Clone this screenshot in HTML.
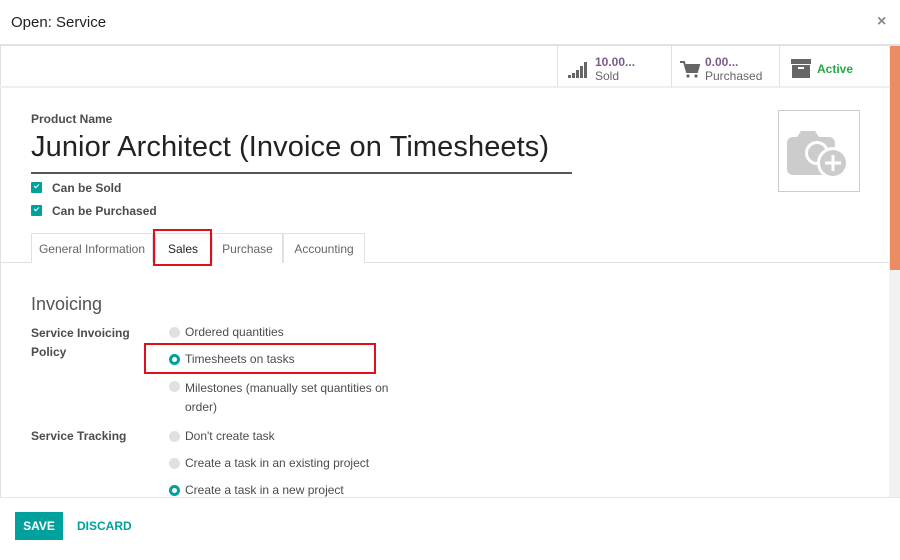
<!DOCTYPE html>
<html><head><style>
*{box-sizing:border-box;margin:0;padding:0}
body{width:900px;height:560px;background:#fff;font-family:"Liberation Sans",sans-serif;color:#4c4c4c;position:relative;overflow:hidden}
.a{position:absolute}
.lbl{font-weight:bold;font-size:12px;color:#4c4c4c}
.cb{position:absolute;width:11px;height:11px;background:#00a09d;border-radius:1px}
.cb:after{content:"";position:absolute;left:3px;top:2px;width:4px;height:2px;border-left:1.5px solid #fff;border-bottom:1.5px solid #fff;transform:rotate(-45deg)}
.rd{position:absolute;width:11px;height:11px;border-radius:50%;background:#dee2e6}
.rd.on{background:#fff;border:3px solid #00a09d}
.t{position:absolute;font-size:12px;color:#4c4c4c}
.tab{position:absolute;top:233px;height:30px;border:1px solid #dee2e6;border-bottom:none;font-size:12px;color:#666;text-align:center;line-height:30px;background:#fff}
</style></head><body>
<div class="a" style="left:11px;top:14px;font-size:15px;color:#222">Open: Service</div>
<div class="a" style="left:877px;top:13px;font-size:16px;color:#888;font-weight:bold">×</div>
<div class="a" style="left:0;top:44px;width:900px;height:2px;background:#dee2e6"></div>
<div class="a" style="left:889px;top:46px;width:11px;height:452px;background:#f1f1f1"></div>
<div class="a" style="left:890px;top:46px;width:10px;height:224px;background:#ec8c63"></div>
<div class="a" style="left:0;top:46px;width:1px;height:452px;background:#dee2e6"></div>
<div class="a" style="left:0;top:86px;width:889px;height:2px;background:#eceef0"></div>
<div class="a" style="left:557px;top:46px;width:1px;height:41px;background:#dee2e6"></div>
<div class="a" style="left:671px;top:46px;width:1px;height:41px;background:#dee2e6"></div>
<div class="a" style="left:779px;top:46px;width:1px;height:41px;background:#dee2e6"></div>
<svg class="a" style="left:568px;top:62px" width="22" height="16"><g fill="#666"><rect x="0" y="13" width="3" height="3"/><rect x="4" y="11" width="3" height="5"/><rect x="8" y="8" width="3" height="8"/><rect x="12" y="4" width="3" height="12"/><rect x="16" y="0" width="3" height="16"/></g></svg>
<div class="a" style="left:595px;top:55px;font-size:12px;color:#7c5b89;font-weight:bold">10.00...</div>
<div class="a" style="left:595px;top:69px;font-size:12px;color:#666">Sold</div>
<svg class="a" style="left:680px;top:61px" width="20" height="17"><path d="M0 1h4l3 10h10l2-7H6" fill="none" stroke="#666" stroke-width="2"/><rect x="6" y="4" width="12" height="6" fill="#666"/><circle cx="8" cy="15" r="1.6" fill="#666"/><circle cx="16" cy="15" r="1.6" fill="#666"/></svg>
<div class="a" style="left:705px;top:55px;font-size:12px;color:#7c5b89;font-weight:bold">0.00...</div>
<div class="a" style="left:705px;top:69px;font-size:12px;color:#666">Purchased</div>
<svg class="a" style="left:791px;top:59px" width="20" height="19"><rect x="0" y="0" width="20" height="5" fill="#666"/><rect x="1" y="6" width="18" height="13" fill="#666"/><rect x="7" y="8" width="6" height="2" fill="#fff"/></svg>
<div class="a" style="left:817px;top:62px;font-size:12px;color:#28a745;font-weight:bold">Active</div>
<div class="a lbl" style="left:31px;top:112px">Product Name</div>
<div class="a" style="left:31px;top:131px;font-size:29px;color:#222;letter-spacing:0.1px">Junior Architect (Invoice on Timesheets)</div>
<div class="a" style="left:31px;top:172px;width:541px;height:2px;background:#555"></div>
<div class="a" style="left:778px;top:110px;width:82px;height:82px;border:1px solid #ccc"></div>
<svg class="a" style="left:787px;top:125px" width="66" height="56"><path d="M14 4h14l4 6h10a6 6 0 0 1 6 6v26a6 6 0 0 1-6 6H6a6 6 0 0 1-6-6V16a6 6 0 0 1 6-6h4z" fill="#ccc" transform="translate(0,2)"/><circle cx="30" cy="28" r="12" fill="#fff"/><circle cx="30" cy="28" r="9" fill="#ccc"/><circle cx="46" cy="38" r="16" fill="#fff"/><circle cx="46" cy="38" r="13" fill="#ccc"/><path d="M46 30v16M38 38h16" stroke="#fff" stroke-width="3"/></svg>
<div class="cb" style="left:31px;top:182px"></div><div class="a lbl" style="left:52px;top:181px">Can be Sold</div>
<div class="cb" style="left:31px;top:205px"></div><div class="a lbl" style="left:52px;top:204px">Can be Purchased</div>
<div class="a" style="left:0;top:262px;width:889px;height:1px;background:#dee2e6"></div>
<div class="tab" style="left:31px;width:122px">General Information</div>
<div class="tab" style="left:155px;width:56px;color:#222;height:31px">Sales</div>
<div class="tab" style="left:212px;width:71px">Purchase</div>
<div class="tab" style="left:283px;width:82px">Accounting</div>
<div class="a" style="left:153px;top:229px;width:59px;height:37px;border:2px solid #e0101a"></div>
<div class="a" style="left:31px;top:294px;font-size:18px;color:#555">Invoicing</div>
<div class="a lbl" style="left:31px;top:324px;line-height:19px">Service Invoicing<br>Policy</div>
<div class="rd" style="left:169px;top:327px"></div><div class="t" style="left:185px;top:325px">Ordered quantities</div>
<div class="rd on" style="left:169px;top:354px"></div><div class="t" style="left:185px;top:352px">Timesheets on tasks</div>
<div class="a" style="left:144px;top:343px;width:232px;height:31px;border:2px solid #e0101a"></div>
<div class="rd" style="left:169px;top:381px"></div><div class="t" style="left:185px;top:379px;line-height:19px">Milestones (manually set quantities on<br>order)</div>
<div class="a lbl" style="left:31px;top:429px">Service Tracking</div>
<div class="rd" style="left:169px;top:431px"></div><div class="t" style="left:185px;top:429px">Don't create task</div>
<div class="rd" style="left:169px;top:458px"></div><div class="t" style="left:185px;top:456px">Create a task in an existing project</div>
<div class="rd on" style="left:169px;top:485px"></div><div class="t" style="left:185px;top:483px">Create a task in a new project</div>
<div class="a" style="left:0;top:497px;width:900px;height:63px;background:#fff;border-top:1px solid #e6e6e6"></div>
<div class="a" style="left:15px;top:512px;width:48px;height:28px;background:#00a09d;color:#fff;font-size:12px;font-weight:bold;text-align:center;line-height:28px">SAVE</div>
<div class="a" style="left:77px;top:519px;font-size:12px;font-weight:bold;color:#00a09d">DISCARD</div>
</body></html>
